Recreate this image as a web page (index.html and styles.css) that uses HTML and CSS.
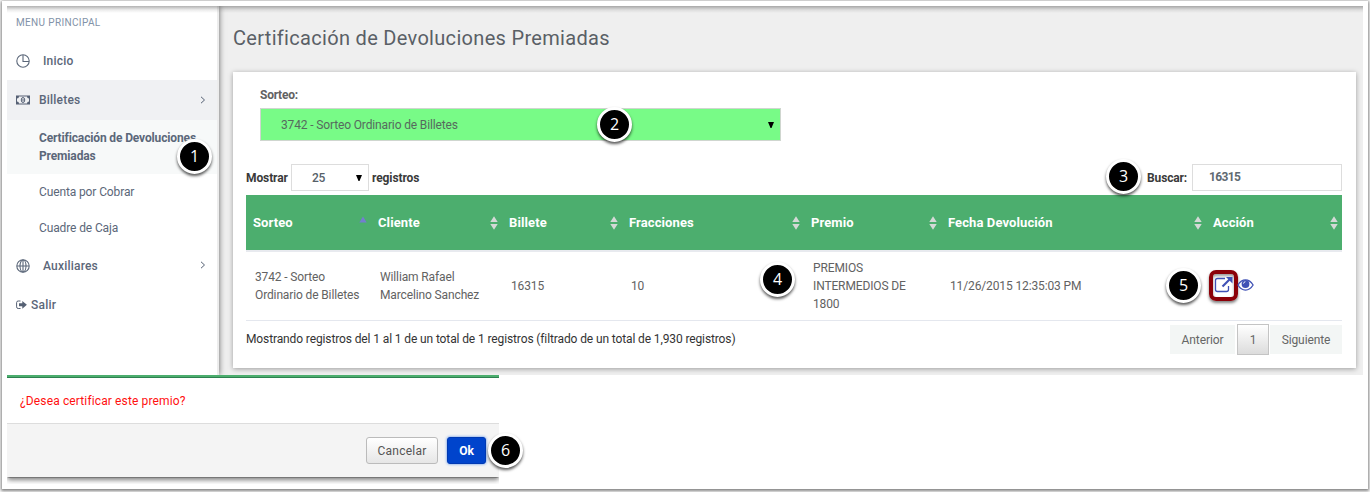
FILE: index.html
```html
<!DOCTYPE html>
<html lang="es">
<head>
<meta charset="utf-8">
<title>Certificación de Devoluciones Premiadas</title>
<link rel="stylesheet" href="styles.css">
</head>
<body>
<svg width="0" height="0" class="defs">
  <symbol id="sort" viewBox="0 0 8 14"><path d="M4 0.3 7.700 6H.3zM.3 8H7.700L4 13.700z"/></symbol>
</svg>
<div class="frame">
  <div class="app">
    <nav class="sidebar">
      <div class="menu-title">MENU PRINCIPAL</div>
      <a class="item"><svg class="ico round" width="14" height="14" viewBox="0 0 14 14"><circle cx="7" cy="7" r="6.200"/><path d="M7 1v6.500h6"/></svg><span>Inicio</span></a>
      <a class="item active"><svg class="ico" width="14" height="10" viewBox="0 0 14 10"><path class="solid" fill-rule="evenodd" d="M0 .5h14v9H0zM3 1.500a2 2 0 0 1-2 2v3a2 2 0 0 1 2 2h8a2 2 0 0 1 2-2v-3a2 2 0 0 1-2-2z"/><path class="note" d="M7 2.500a1.600 2.300 0 0 1 0 5 1.600 2.300 0 0 1 0-5zM7 3.800v2.500"/></svg><span>Billetes</span><svg class="chev" width="6" height="8" viewBox="0 0 6 8"><path d="M1 .8 4.500 4 1 7.200"/></svg></a>
      <a class="sub current">Certificación de Devoluciones Premiadas</a>
      <a class="sub">Cuenta por Cobrar</a>
      <a class="sub">Cuadre de Caja</a>
      <a class="item aux"><svg class="ico round" width="14" height="14" viewBox="0 0 14 14"><circle cx="7" cy="7" r="6.200"/><ellipse cx="7" cy="7" rx="3" ry="6"/><path d="M7 1v12M1 7h12"/></svg><span>Auxiliares</span><svg class="chev up" width="6" height="8" viewBox="0 0 6 8"><path d="M1 .8 4.500 4 1 7.200"/></svg></a>
      <a class="item exit"><svg width="11" height="10" viewBox="0 0 11 10"><path class="line" d="M4.500 1H2.200Q.6 1 .6 2.600v4.300Q.6 8.500 2.200 8.500h2.300"/><path class="solid" d="M3 3.300h3.300V.9L10.900 4.800 6.300 8.700V6.300H3z"/></svg><span>Salir</span></a>
    </nav>
    <main class="main">
      <h1>Certificación de Devoluciones Premiadas</h1>
      <section class="card">
        <label class="draw-label">Sorteo:</label>
        <div class="draw-select"><span>3742 - Sorteo Ordinario de Billetes</span><svg class="arrow" width="6" height="6" viewBox="0 0 6 6"><path d="M0 0h6L3.500 6h-1z"/></svg></div>
        <div class="controls">
          <span class="lbl show">Mostrar</span>
          <div class="len"><span>25</span><svg class="arrow" width="6" height="6" viewBox="0 0 6 6"><path d="M0 0h6L3.500 6h-1z"/></svg></div>
          <span class="lbl rows">registros</span>
          <span class="lbl find">Buscar:</span>
          <div class="search">16315</div>
        </div>
        <table>
          <colgroup><col class="c1"><col class="c2"><col class="c3"><col class="c4"><col class="c5"><col class="c6"><col class="c7"></colgroup>
          <thead><tr>
            <th><div>Sorteo<svg class="sorted" width="8" height="14" viewBox="0 0 8 14"><path d="M4 .5 7.700 6.500H.3z"/></svg></div></th>
            <th><div>Cliente<svg width="8" height="14"><use href="#sort"/></svg></div></th>
            <th><div>Billete<svg width="8" height="14"><use href="#sort"/></svg></div></th>
            <th><div>Fracciones<svg width="8" height="14"><use href="#sort"/></svg></div></th>
            <th><div>Premio<svg width="8" height="14"><use href="#sort"/></svg></div></th>
            <th><div>Fecha Devolución<svg width="8" height="14"><use href="#sort"/></svg></div></th>
            <th><div>Acción<svg width="8" height="14"><use href="#sort"/></svg></div></th>
          </tr></thead>
          <tbody><tr>
            <td>3742 - Sorteo<br>Ordinario de Billetes</td>
            <td>William Rafael<br>Marcelino Sanchez</td>
            <td>16315</td>
            <td>10</td>
            <td>PREMIOS<br>INTERMEDIOS DE<br>1800</td>
            <td>11/26/2015 12:35:03 PM</td>
            <td class="actions"><div>
              <span class="mark"><svg width="19" height="18" viewBox="0 0 19 18"><path class="pen" d="M11 2.500H3.500Q1.500 2.500 1.500 4.500v9q0 2 2 2h9q2 0 2-2V10"/><path class="shaft" d="M8.500 10.500 15.500 3.500"/><path class="tip" d="M12 1h6.500v6.500z"/></svg></span>
              <svg class="eye" width="17" height="12" viewBox="0 0 17 12"><path class="lid" d="M.9 6Q4 .9 8.500.9T16.100 6Q13 11.100 8.500 11.100T.9 6z"/><circle cx="8.500" cy="5" r="3.900"/><path class="glint" d="M6.500 4.600q.2-1.700 1.900-1.900"/></svg>
            </div></td>
          </tr></tbody>
        </table>
        <div class="foot">
          <span class="info">Mostrando registros del 1 al 1 de un total de 1 registros (filtrado de un total de 1,930 registros)</span>
          <div class="pager"><span class="pg prev">Anterior</span><span class="pg num">1</span><span class="pg next">Siguiente</span></div>
        </div>
      </section>
    </main>
  </div>
  <div class="dialog-clip">
    <div class="dialog">
      <p>¿Desea certificar este premio?</p>
      <div class="buttons"><button class="cancel">Cancelar</button><button class="ok">Ok</button></div>
    </div>
  </div>
</div>
<span class="badge b1">1</span>
<span class="badge b2">2</span>
<span class="badge b3">3</span>
<span class="badge b4">4</span>
<span class="badge b5">5</span>
<span class="badge b6">6</span>
</body>
</html>
```
FILE: styles.css
```css
* { box-sizing: border-box; }
body { margin: 0; padding: 1px 2px 0; height: 492px; overflow: hidden; position: relative; background: #fff; font: 12px/18px Roboto, "Liberation Sans", sans-serif; color: #626262; }
.defs { display: block; position: absolute; }
.frame { width: 1366px; height: 488px; padding: 5px; background: #fff; box-shadow: 0 1px 3px 1px rgba(0,0,0,.5); }
.app { display: flex; width: 1356px; height: 369px; background: #efefef; overflow: hidden; position: relative; }
.app::before { content: ""; position: absolute; z-index: 3; left: 0; right: 0; top: 0; height: 7px; background: linear-gradient(rgba(0,0,0,.3), rgba(0,0,0,.08) 55%, transparent); }

/* Sidebar */
.sidebar { width: 212px; background: #fff; border-right: 2px solid #ededed; box-shadow: 0 0 6px rgba(0,0,0,.6); color: #5b6779; flex: none; z-index: 1; }
.menu-title { height: 36px; padding: 8px 0 0 9px; font-size: 10px; line-height: 18px; letter-spacing: .35px; color: #8292a8; }
.item { display: flex; align-items: center; height: 38px; padding: 0 11px 0 9px; font-weight: 500; letter-spacing: .2px; }
.item .ico { margin-right: 9px; }
.item .ico.round { margin-right: 13px; }
.round { fill: none; stroke: #5b6779; stroke-width: 1.1; }
.solid { fill: #566174; }
.note, .line, .chev { fill: none; stroke: #566174; stroke-width: 1; }
.chev { margin-left: auto; }
.active { background: #f0f1f3; height: 40px; }
.sub { display: block; height: 36px; line-height: 36px; padding-left: 32px; letter-spacing: -.12px; }
.current { height: 54px; line-height: 18px; padding: 9px 0 0 32px; background: #f7f9f9; font-weight: 700; letter-spacing: -.14px; }
.aux { height: 40px; }
.chev.up { margin-top: -3px; }
.exit { height: 37px; }
.exit span { margin-left: 4px; }

/* Main panel */
.main { flex: 1; padding: 19px 0 0 14px; }
h1 { margin: 0; font-size: 20px; line-height: 26px; font-weight: 400; letter-spacing: .31px; color: #5a5f66; }
.card { margin-top: 21px; width: 1123px; height: 296px; background: #fff; box-shadow: 0 1px 5px rgba(0,0,0,.35); padding: 14px 14px 0 13px; }
.draw-label { display: block; margin-left: 14px; font-weight: 700; letter-spacing: -.25px; height: 22px; }
.draw-select { margin-left: 14px; width: 521px; height: 33px; border: 1px solid #cfd6cf; background: #78fb87; display: flex; align-items: center; justify-content: space-between; padding: 0 6px 0 20px; color: #566a5e; letter-spacing: -.14px; }
.arrow { fill: #000; }
.controls { display: flex; align-items: center; margin-top: 23px; height: 27px; }
.lbl { font-weight: 700; color: #3a3a3a; letter-spacing: -.1px; }
.show { width: 45px; }
.len { width: 78px; height: 27px; border: 1px solid #ddd; display: flex; align-items: center; justify-content: space-between; padding: 0 6px 0 20px; font-weight: 500; letter-spacing: -.3px; color: #566069; }
.rows { margin-left: 3px; }
.find { margin-left: auto; margin-right: 5px; letter-spacing: -.15px; }
.search { width: 150px; height: 27px; border: 1px solid #ddd; padding: 0 16px; line-height: 24px; font-weight: 700; letter-spacing: -.65px; color: #5f6a72; }

/* Results table */
table { margin-top: 4px; width: 1096px; table-layout: fixed; border-collapse: separate; border-spacing: 0; }
.c1 { width: 125px; } .c2 { width: 131px; } .c3 { width: 120px; } .c4 { width: 182px; } .c5 { width: 137px; } .c6 { width: 265px; } .c7 { width: 136px; }
th { height: 57px; padding: 0 4.500px 0 7px; background: #4cae6e; background-clip: padding-box; border-bottom: 2px solid #e8eaef; color: #fff; font-size: 13px; font-weight: 700; letter-spacing: .1px; text-align: left; }
th div { display: flex; align-items: center; justify-content: space-between; }
th svg { fill: #d4d9d6; }
th .sorted { fill: #737ed0; }
td { height: 69px; padding: 0 9px; border-bottom: 1px solid #e4e7ee; vertical-align: middle; white-space: nowrap; letter-spacing: -.13px; }
.actions { padding: 0 0 0 3px; }
.actions div { display: flex; align-items: center; }
.mark { display: flex; width: 29px; height: 31px; margin-top: -2px; padding: 2px; align-items: center; justify-content: center; border: 4px solid #8b0008; border-radius: 7px; box-shadow: 0 2px 3px rgba(0,0,0,.5), inset 0 2px 3px rgba(0,0,0,.4); }
.mark svg { flex: none; }
.pen { fill: none; stroke: #3f51b5; stroke-width: 1.3; }
.shaft { stroke: #3f51b5; stroke-width: 2.2; }
.tip, .eye { fill: #3f51b5; }
.eye { margin-left: -1px; margin-top: -2px; }
.lid { fill: none; stroke: #3f51b5; stroke-width: 1.3; }
.glint { fill: none; stroke: #fff; stroke-width: .9; }
.foot { display: flex; justify-content: space-between; }
.info { padding-top: 9px; color: #333; letter-spacing: -.118px; }
.pager { display: flex; padding-top: 3px; }
.pg { height: 29px; margin-top: 1px; line-height: 30px; text-align: center; background: #f3f6f5; color: #666; letter-spacing: -.1px; }
.prev { width: 65px; }
.num { width: 32px; height: 31px; margin: 0 1px 0 2px; border: 1px solid #c4c4c4; background: linear-gradient(#fff, #dcdcdc); }
.next { width: 72px; }

/* Confirmation dialog */
.dialog-clip { width: 492px; height: 109px; overflow: hidden; background: #fff; }
.dialog { height: 103px; border-top: 2px solid #4cae6e; border-bottom: 1px solid #777; border-radius: 0 0 3px 3px; box-shadow: 0 2px 5px rgba(0,0,0,.5), inset 0 1px #2e8050; background: #fff; }
.dialog p { margin: 0; height: 46px; padding: 15px 13px 0; color: #ff1010; letter-spacing: .13px; }
.buttons { display: flex; justify-content: flex-end; align-items: flex-start; height: 54px; padding: 13px 13px 0; gap: 9px; background: #f4f4f4; border-top: 1px solid #ddd; }
button { height: 27px; padding: 0; font: 12px Roboto, sans-serif; border-radius: 3px; }
.cancel { width: 72px; border: 1px solid #bbb; background: linear-gradient(#fff, #e6e6e6); color: #555; letter-spacing: .25px; }
.ok { width: 39px; border: 1px solid #0039b3; background: #0044cc; color: #fff; font-weight: 700; box-shadow: 0 0 3px #4a85e8; }

/* Numbered step markers over the interface */
.badge { position: absolute; width: 35px; height: 35px; border: 3px solid #fff; border-radius: 50%; background: #000; color: #fff; font: 16px/29px "Open Sans", sans-serif; text-align: center; box-shadow: 0 2px 3px rgba(0,0,0,.65); z-index: 5; }
.b1 { left: 177px; top: 139px; }
.b2 { left: 597px; top: 107px; }
.b3 { left: 1106px; top: 159px; }
.b4 { left: 760px; top: 262px; }
.b5 { left: 1166px; top: 268px; }
.b6 { left: 488px; top: 433px; }
```
